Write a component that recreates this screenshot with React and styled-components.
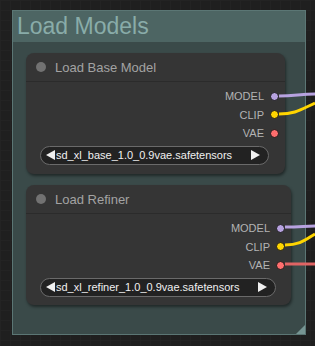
import React from "react";
import styled, { createGlobalStyle } from "styled-components";

const Global = createGlobalStyle`
  html, body {
    margin: 0;
    padding: 0;
    background: #1f1f1f;
    font-family: "Liberation Sans", Arial, sans-serif;
  }
  #root {
    width: 315px;
    height: 346px;
    overflow: hidden;
    position: relative;
  }
`;

const Canvas = styled.div`
  width: 315px;
  height: 346px;
  padding: 10px 0 0 12px;
  box-sizing: border-box;
  background-color: #1f1f1f;
  background-image: linear-gradient(#232323 1px, transparent 1px),
    linear-gradient(90deg, #232323 1px, transparent 1px);
  background-size: 10px 10px;
`;

const Group = styled.div`
  position: relative;
  width: 294px;
  height: 325px;
  box-sizing: border-box;
  border: 1px solid #5b7674;
  background: #3a4a49;
  display: flex;
  flex-direction: column;
`;

const GroupTitle = styled.div`
  height: 31px;
  background: #4d6563;
  color: #89aca9;
  font-size: 23px;
  line-height: 31px;
  padding-left: 4px;
  white-space: nowrap;
`;

const GroupBody = styled.div`
  display: flex;
  flex-direction: column;
  gap: 11px;
  padding: 11px 0 0 13px;
`;

const Corner = styled.div`
  position: absolute;
  right: 0;
  bottom: 0;
  width: 0;
  height: 0;
  border-left: 9px solid transparent;
  border-bottom: 9px solid #769593;
`;

const Node = styled.div`
  width: ${(p) => p.w}px;
  height: ${(p) => p.h}px;
  box-sizing: border-box;
  background: #353535;
  border-radius: 8px;
  box-shadow: 1px 2px 3px rgba(0, 0, 0, 0.45);
  display: flex;
  flex-direction: column;
`;

const NodeTitle = styled.div`
  height: 29px;
  box-sizing: border-box;
  border-bottom: 1px solid #2b2b2b;
  display: flex;
  align-items: center;
  gap: 9px;
  padding-left: 10px;
  color: #a3a3a3;
  font-size: 13px;
  .dot {
    width: 10px;
    height: 10px;
    border-radius: 50%;
    background: #727272;
  }
`;

const Outputs = styled.div`
  display: flex;
  flex-direction: column;
  align-items: flex-end;
  padding: 5px 6px 0 0;
`;

const Slot = styled.div`
  height: 18.5px;
  display: flex;
  align-items: center;
  gap: 6px;
  color: #b3b3b3;
  font-size: 11px;
  span.pin {
    width: 7px;
    height: 7px;
    border-radius: 50%;
    border: 1px solid #1b1b1b;
    background: ${(p) => p.color};
  }
`;

const Combo = styled.div`
  margin: 3px ${(p) => p.right}px 0 14px;
  height: 19px;
  box-sizing: border-box;
  border: 1px solid #6a6a6a;
  border-radius: 10px;
  background: #222222;
  display: flex;
  align-items: center;
  padding: 0 8px 0 5px;
  color: #f0f0f0;
  font-size: 11px;
  .arrow {
    width: 0;
    height: 0;
    border-top: 5px solid transparent;
    border-bottom: 5px solid transparent;
  }
  .left {
    border-right: 9px solid #f0f0f0;
  }
  .right {
    border-left: 9px solid #f0f0f0;
    margin-left: auto;
  }
  .value {
    margin-left: 1px;
    white-space: nowrap;
  }
`;

const Wires = styled.svg`
  position: absolute;
  left: 0;
  top: 0;
  pointer-events: none;
`;

const slots = [
  { name: "MODEL", color: "#b7a2e0" },
  { name: "CLIP", color: "#ffd500" },
  { name: "VAE", color: "#ff6e6e" },
];

function LoaderNode({ title, file, w, h, right }) {
  return (
    <Node w={w} h={h}>
      <NodeTitle>
        <span className="dot" />
        {title}
      </NodeTitle>
      <Outputs>
        {slots.map((s) => (
          <Slot key={s.name} color={s.color}>
            {s.name}
            <span className="pin" />
          </Slot>
        ))}
      </Outputs>
      <Combo right={right}>
        <span className="arrow left" />
        <span className="value">{file}</span>
        <span className="arrow right" />
      </Combo>
    </Node>
  );
}

export default function App() {
  return (
    <>
      <Global />
      <Canvas>
        <Group>
          <GroupTitle>Load Models</GroupTitle>
          <GroupBody>
            <LoaderNode
              title="Load Base Model"
              file="sd_xl_base_1.0_0.9vae.safetensors"
              w={259}
              h={121}
              right={16}
            />
            <LoaderNode
              title="Load Refiner"
              file="sd_xl_refiner_1.0_0.9vae.safetensors"
              w={265}
              h={120}
              right={15}
            />
          </GroupBody>
          <Corner />
        </Group>
      </Canvas>
      <Wires width="315" height="346">
        <path d="M279 96 C 295 96, 300 94, 315 94" stroke="#b7a2e0" strokeWidth="3" fill="none" />
        <path d="M279 114 C 295 114, 300 110, 315 103" stroke="#ffd500" strokeWidth="3" fill="none" />
        <path d="M285 227 C 300 227, 305 226, 315 226" stroke="#b7a2e0" strokeWidth="3" fill="none" />
        <path d="M285 245 C 300 245, 305 240, 315 234" stroke="#ffd500" strokeWidth="3" fill="none" />
        <path d="M285 264 L 315 264" stroke="#e06464" strokeWidth="3" fill="none" />
      </Wires>
    </>
  );
}
